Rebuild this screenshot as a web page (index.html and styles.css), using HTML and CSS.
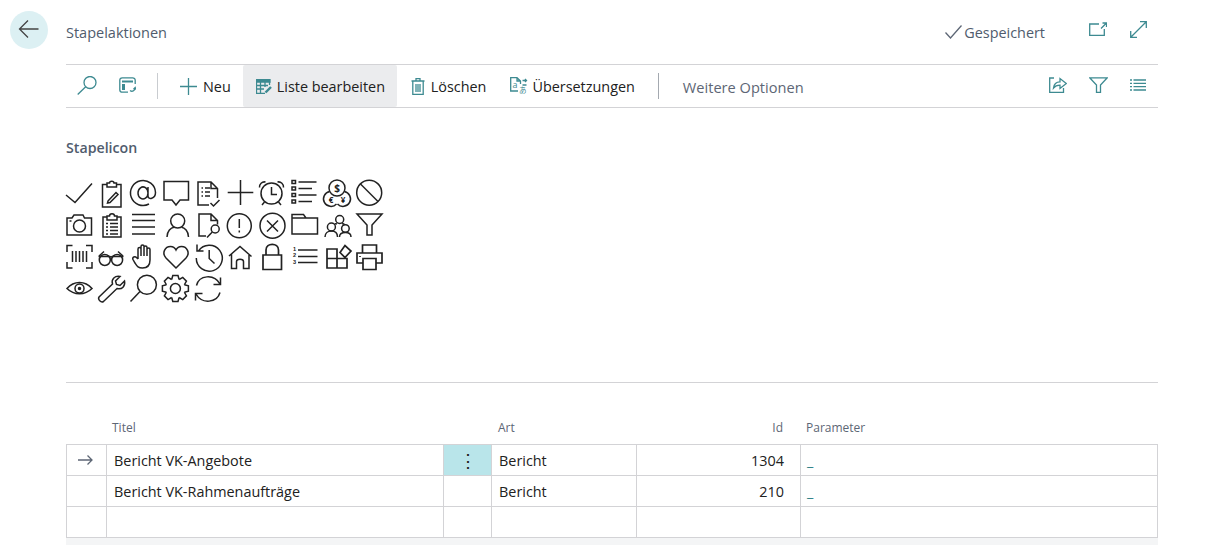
FILE: index.html
```html
<!DOCTYPE html>
<html lang="de">
<head>
<meta charset="utf-8">
<title>Stapelaktionen</title>
<link rel="stylesheet" href="styles.css">
</head>
<body>
<div class="page">
  <header class="head">
    <button class="back" aria-label="Zurück"><svg class="ic-dark" width="22" height="20" viewBox="0 0 22 20"><path d="M20.500 10H1.500M10 1.500L1.500 10L10 18.500"/></svg></button>
    <h1 class="title">Stapelaktionen</h1>
    <div class="saved"><svg class="ic-grey" width="17" height="16" viewBox="0 0 17 16"><path d="M.5 8.500L5.500 14L16.500 1.500"/></svg><span>Gespeichert</span></div>
    <svg class="ic-teal open" width="18" height="14" viewBox="0 0 18 14"><path d="M10 2H.7V13.300H15.300V7M12 6.500L17 1.500M13.500 1H17.500V5"/></svg>
    <svg class="ic-teal expand" width="17" height="17" viewBox="0 0 17 17"><path d="M1 16L16 1M10 .7H16.300V7M.7 10V16.300H7"/></svg>
  </header>

  <nav class="bar">
    <svg class="ic-teal t-search" width="20" height="19" viewBox="0 0 20 19"><circle cx="13" cy="6.500" r="6"/><path d="M8.700 10.800L.7 18.500"/></svg>
    <svg class="ic-teal t-view" width="17" height="16" viewBox="0 0 17 16"><path d="M9 15.200H3.300A2.500 2.500 0 0 1 .8 12.700V3.300A2.500 2.500 0 0 1 3.300 .8H13.700A2.500 2.500 0 0 1 16.200 3.300V7"/><path d="M3 4.500H14" stroke-width="2"/><rect x="3" y="7" width="3" height="6" fill="#3d8a91" stroke="none"/><path d="M11 13.500C13 15 16 14 16.200 11M14.500 12.300L16.200 10.500L16.800 12.500"/></svg>
    <span class="sep first"></span>
    <div class="act neu"><svg class="ic-teal" width="17" height="17" viewBox="0 0 17 17"><path d="M8.500 0V17M0 8.500H17"/></svg><span>Neu</span></div>
    <div class="act hot"><svg class="ic-teal" width="16" height="15" viewBox="0 0 16 15"><path d="M.5 .5H14V3H.5Z" fill="#3d8a91"/><path d="M.5 3V14.500H9M.5 6.500H12M.5 10H8M4.500 3V14.500M9 3V8M13.500 3V6"/><path d="M9.500 13.500L15 8" stroke-width="2.400"/></svg><span>Liste bearbeiten</span></div>
    <div class="act del"><svg class="ic-teal" width="14" height="17" viewBox="0 0 14 17"><path d="M.5 3H13.500M5 3V.7H9V3M1.800 3V16.300H12.200V3M5 6V14M7 6V14M9 6V14"/></svg><span>Löschen</span></div>
    <div class="act tr"><svg class="ic-teal" width="18" height="18" viewBox="0 0 18 18"><path d="M8 14H.7V.7H7L10.500 4V7M7 .7V4H10.500"/><text x="2.500" y="10.500" class="mini">a</text><text x="9" y="15.500" class="mini2">あ</text><path d="M12.500 3.500h4M15 2l1.500 1.500L15 5M12.500 8h4"/></svg><span>Übersetzungen</span></div>
    <span class="sep second"></span>
    <div class="more">Weitere Optionen</div>
    <div class="bar-right">
      <svg class="ic-teal" width="18" height="16" viewBox="0 0 18 16"><path d="M5 1H.7V15.300H14.500V11"/><path d="M4.500 11C5 6.500 8 4.800 11 4.800V1.500L17.300 6.500L11 11.500V8.200C8.500 8.200 6 9 4.500 11Z"/></svg>
      <svg class="ic-teal" width="19" height="16" viewBox="0 0 19 16"><path d="M.7 .8H18.300L11.500 8V15.300H7.500V8Z"/></svg>
      <svg class="ic-teal" width="16" height="12" viewBox="0 0 16 12"><path d="M0 1H2M3.500 1H16M0 4.300H2M3.500 4.300H16M0 7.600H2M3.500 7.600H16M0 11H2M3.500 11H16"/></svg>
    </div>
  </nav>

  <main class="content">
    <h2 class="label">Stapelicon</h2>
    <div class="icons">
      <svg viewBox="0 0 32 32"><path d="M3 18L12 25.500L29 6.500"/></svg>
      <svg viewBox="0 0 32 32"><path d="M12 7.500H7.500V30H26V7.500H21.500M12 10V6H14.500C14.500 3.500 19 3.500 19 6H21.500V10Z"/><path d="M13 24L21 15.500L23 17.500L15 25.500L12.500 26Z"/></svg>
      <svg viewBox="0 0 32 32"><path d="M21 16A5 6 0 1 1 21 15.900M21 10V19C21 23 28.500 22 28.500 15.500A12.500 12.500 0 1 0 22 27"/></svg>
      <svg viewBox="0 0 32 32"><path d="M4 4.500H28.500V23H20L16 28L12 23H4Z"/></svg>
      <svg viewBox="0 0 32 32"><path d="M17 28H6V5H19L25.500 11.500V21M19 5V11.500H25.500M9.500 11H11M13 11H18M9.500 15H11M13 15H18M9.500 19H11M13 19H18"/><path d="M18.500 26L21.500 29L27.500 23"/></svg>
      <svg viewBox="0 0 32 32"><path d="M16.500 3V28M3.700 15.500H29.300"/></svg>
      <svg viewBox="0 0 32 32"><circle cx="15.500" cy="16.500" r="10.500"/><path d="M15.500 10V17.500H21M3.500 10.500A5 5 0 0 1 9.500 5M21.500 5A5 5 0 0 1 27.500 10.500M8.500 25L6 28M22.500 25L25 28"/></svg>
      <svg viewBox="0 0 32 32"><path d="M4 3.500H7.500V6.500H4ZM4 10H7.500V13H4ZM4 16.500H7.500V19.500H4ZM4 23H7.500V26H4ZM10.500 5H28.500M10.500 11.500H24M10.500 18H28.500M10.500 24.500H24"/></svg>
      <svg viewBox="0 0 32 32"><circle cx="16" cy="11" r="8"/><path d="M8.800 14.500A7.500 7.500 0 1 0 15.500 27M23.200 14.500A7.500 7.500 0 1 1 16.500 27"/><text x="16" y="15" class="sym">$</text><text x="10" y="26" class="sym2">€</text><text x="22" y="26" class="sym2">¥</text></svg>
      <svg viewBox="0 0 32 32"><circle cx="16.200" cy="15.700" r="12.500"/><path d="M7.500 7L25 24.500"/></svg>

      <svg viewBox="0 0 32 32"><path d="M4 9H9L11 6H20L21.500 9H28.500V26H4Z"/><circle cx="16.500" cy="17" r="6"/><path d="M6.500 12H8.500"/></svg>
      <svg viewBox="0 0 32 32"><path d="M12 8H8V28H26V8H22M12 11V7H14.500C14.500 4 19.500 4 19.500 7H22V11Z"/><path d="M11 14.500H13M15 14.500H23M11 18H13M15 18H23M11 21.500H13M15 21.500H23M11 25H13M15 25H23"/></svg>
      <svg viewBox="0 0 32 32"><path d="M5 5.500H28M5 11.500H28M5 18H28M5 25H28"/></svg>
      <svg viewBox="0 0 32 32"><circle cx="17.700" cy="12" r="7"/><path d="M7 28C7 22 11 18.500 14 18.200M28.500 28C28.500 22 24.500 18.500 21.500 18.200"/></svg>
      <svg viewBox="0 0 32 32"><path d="M14 27H7V5H19L25.500 11.500V15.500M19 5V11.500H25.500"/><circle cx="23.200" cy="20" r="4"/><path d="M20.300 23L15 28.500"/></svg>
      <svg viewBox="0 0 32 32"><circle cx="15.300" cy="16.700" r="12"/><path d="M15.300 10V19M15.300 21.500V23.500"/></svg>
      <svg viewBox="0 0 32 32"><circle cx="16.500" cy="16.700" r="12.500"/><path d="M11 11.500L22 22.500M22 11.500L11 22.500"/></svg>
      <svg viewBox="0 0 32 32"><path d="M4 5.500H15.500L18 9H29.500V25H4ZM4 9H18"/></svg>
      <svg viewBox="0 0 32 32"><circle cx="18.700" cy="10.500" r="4"/><circle cx="10.400" cy="18" r="4"/><circle cx="24.400" cy="19.500" r="3.800"/><path d="M13.500 15.500C14 14.500 15 14.500 16 15M21 15C22 14.500 23 15 23.500 15.700M4 28C4 24 7 22 10.400 22C14 22 16.500 24 16.500 28M18.500 28C18.500 25 21 23.500 24.400 23.500C27.500 23.500 30 25 30 28"/></svg>
      <svg viewBox="0 0 32 32"><path d="M4 5H29L19 16V26H14V16Z"/></svg>

      <svg viewBox="0 0 32 32"><path d="M9.500 4.500H4V11M23 4.500H29V11M9.500 27H4V21M23 27H29V21M9.500 10V21M13 10V21M16.500 10V21M20 10V21M23.500 10V21"/></svg>
      <svg viewBox="0 0 32 32"><circle cx="9.800" cy="19" r="5.500"/><circle cx="22.100" cy="19" r="5.500"/><path d="M3.500 15.500H15M17 15.500H28.500M15 16.500C15.500 15 16.500 15 17 16.500M4 15L9 10.500M28 15L23 10.500"/></svg>
      <svg viewBox="0 0 32 32"><path d="M11 18V8C11 6 14 6 14 8V5.500C14 3.500 17 3.500 17 5.500V6.500C17 4.500 20 4.500 20 6.500V8.500C20 6.500 23 6.500 23 8.500V19C23 24 21 27 15.500 27C11 27 10 25 8 22L6 18.500C5 16 8 15 9.500 16.500L11 18M14 8V15M17 6.500V15M20 8.500V15"/></svg>
      <svg viewBox="0 0 32 32"><path d="M16 27L6 17C1.500 12 5 5.500 10.500 5.500C13 5.500 15 7 16 9C17 7 19 5.500 21.500 5.500C27 5.500 30.500 12 26 17Z"/></svg>
      <svg viewBox="0 0 32 32"><path d="M6.500 10A13 13 0 1 1 4.300 17M5 3.500V10H11.500M17.200 9V17.500L22.500 22.500"/></svg>
      <svg viewBox="0 0 32 32"><path d="M5 15L16 5.500L27.500 15.500M7.500 13V27.500H12.500V20.500C12.500 17.500 19.500 17.500 19.500 20.500V27.500H25V13"/></svg>
      <svg viewBox="0 0 32 32" class="thick"><path d="M7 14H25.500V28.500H7ZM10 14V9C10 1.500 22.500 1.500 22.500 9V14"/></svg>
      <svg viewBox="0 0 32 32"><path d="M10 9H29.500M10 15.500H29.500M10 21.500H29.500"/><text x="6.500" y="9.500" class="num">1</text><text x="6.500" y="16" class="num">2</text><text x="6.500" y="22.500" class="num">3</text></svg>
      <svg viewBox="0 0 32 32" class="thick"><path d="M6 8H16V27H6ZM6 17.500H26V27H16M19 11.500L24 4.500L30 10L24 16.500Z"/></svg>
      <svg viewBox="0 0 32 32" class="thick"><path d="M9.500 12V4H23.500V12M9.500 22H4V12H29V22H23M10 17.500H23V28.500H10Z"/><path d="M7 15V16"/></svg>

      <svg viewBox="0 0 32 32"><path d="M4 15.500C11 7.500 22 7.500 29 15.500C22 22.500 11 22.500 4 15.500Z"/><circle cx="16.500" cy="15.500" r="4.500"/><circle cx="16.500" cy="15.500" r="1" fill="#222"/></svg>
      <svg viewBox="0 0 32 32"><path d="M4 24L17.500 11C16 6 20 2.500 25 3.500L20.500 8L21.500 11.500L25 12.500L29.500 8C30.500 13 27 17 22 15.500L8.500 28.500C6 30 2.500 26.500 4 24Z"/></svg>
      <svg viewBox="0 0 32 32"><circle cx="19.900" cy="11.700" r="9.500"/><path d="M13 18.500L3.500 28.500"/></svg>
      <svg viewBox="0 0 32 32"><g transform="translate(15.400 15.500)"><circle r="5"/><path d="M-3.700-9L-2.600-13H2.600L3.700-9"/><path transform="rotate(45)" d="M-3.700-9L-2.600-13H2.600L3.700-9"/><path transform="rotate(90)" d="M-3.700-9L-2.600-13H2.600L3.700-9"/><path transform="rotate(135)" d="M-3.700-9L-2.600-13H2.600L3.700-9"/><path transform="rotate(180)" d="M-3.700-9L-2.600-13H2.600L3.700-9"/><path transform="rotate(225)" d="M-3.700-9L-2.600-13H2.600L3.700-9"/><path transform="rotate(270)" d="M-3.700-9L-2.600-13H2.600L3.700-9"/><path transform="rotate(315)" d="M-3.700-9L-2.600-13H2.600L3.700-9"/></g></svg>
      <svg viewBox="0 0 32 32"><path d="M4.500 12.500C7 2 22 .5 28 11M28.500 4.500V11.500H21.500M28 19.500C25 30 10 31.500 4 21M3.500 27.500V20.500H10.500"/></svg>
    </div>

    <div class="rule"></div>

    <table class="grid">
      <colgroup><col class="c0"><col class="c1"><col class="c2"><col class="c3"><col class="c4"><col class="c5"></colgroup>
      <thead>
        <tr><th></th><th class="h-title">Titel</th><th></th><th class="h-art">Art</th><th class="h-id">Id</th><th class="h-par">Parameter</th></tr>
      </thead>
      <tbody>
        <tr>
          <td class="mark"><svg class="ic-grey" width="15" height="10" viewBox="0 0 15 10"><path d="M0 5H14M9.500 .5L14 5L9.500 9.500"/></svg></td>
          <td>Bericht VK-Angebote</td>
          <td class="dots">⋮</td>
          <td>Bericht</td>
          <td class="num-cell">1304</td>
          <td class="link">_</td>
        </tr>
        <tr>
          <td class="mark"></td>
          <td>Bericht VK-Rahmenaufträge</td>
          <td></td>
          <td>Bericht</td>
          <td class="num-cell">210</td>
          <td class="link">_</td>
        </tr>
        <tr><td class="mark"></td><td></td><td></td><td></td><td></td><td></td></tr>
      </tbody>
    </table>
    <div class="strip"></div>
  </main>
</div>
</body>
</html>
```

FILE: styles.css
```css
* { box-sizing: border-box; }
html, body { margin: 0; padding: 0; background: #fff; }
body {
  width: 1210px;
  height: 545px;
  overflow: hidden;
  font-family: "Open Sans", "Noto Sans", sans-serif;
  font-size: 14.4px;
  color: #212121;
}
svg { display: block; flex: none; fill: none; stroke-width: 1.3; }
.ic-dark { stroke: #444; }
.ic-grey { stroke: #5d6675; }
.ic-teal { stroke: #3d8a91; }

.head {
  height: 64px;
  padding: 0 63px 0 10px;
  display: flex;
  align-items: center;
}
.back {
  width: 38px;
  height: 38px;
  margin: -5px 18px 0 0;
  padding: 0;
  border: 0;
  border-radius: 50%;
  background: #dcf0f3;
  display: flex;
  align-items: center;
  justify-content: center;
}
.back svg { margin-top: -2px; }
.title {
  margin: 0;
  font-size: 14.5px;
  font-weight: 400;
  color: #505c6d;
}
.saved {
  margin-left: auto;
  display: flex;
  align-items: center;
  gap: 2px;
  color: #505c6d;
}
.open { margin: -6px 0 0 44px; }
.expand { margin: -6px 0 0 23px; }

.bar {
  height: 44px;
  margin: 0 52px 0 66px;
  border-top: 1px solid #d3d3d6;
  border-bottom: 1px solid #d3d3d6;
  display: flex;
  align-items: center;
}
.t-search { margin: -2px 0 0 11px; }
.t-view { margin: -3px 0 0 22px; }
.sep { width: 1px; height: 26px; background: #c9ccd0; flex: none; }
.sep.first { margin-left: 21px; }
.sep.second { margin-left: 23px; background: #a4a9b0; }
.act { display: flex; align-items: center; height: 100%; white-space: nowrap; }
.act span { padding-top: 1px; }
.neu { margin-left: 22px; gap: 6px; }
.hot {
  margin-left: 12px;
  width: 154px;
  padding-left: 13px;
  gap: 5px;
  background: #ebecee;
  border-radius: 2px;
}
.del { margin-left: 14px; gap: 6px; }
.tr { margin-left: 24px; gap: 4px; }
.more { margin-left: 24px; padding-top: 1px; color: #5d6675; white-space: nowrap; font-size: 14.6px; }
.bar-right {
  margin-left: auto;
  display: flex;
  align-items: center;
  gap: 22px;
  padding-right: 12px;
  margin-top: -3px;
}
.mini { font: 9px "Open Sans", sans-serif; fill: #3d8a91; stroke: none; }
.mini2 { font: 7.5px "Noto Sans CJK JP", sans-serif; fill: #3d8a91; stroke: none; }

.content { padding: 0 52px 0 66px; }
.label {
  margin: 30px 0 19px;
  height: 20px;
  line-height: 20px;
  font-size: 14.2px;
  font-weight: 600;
  color: #505c6d;
}
.icons {
  margin-left: -3px;
  display: grid;
  grid-template-columns: repeat(10, 32.2px);
  grid-auto-rows: 32px;
}
.icons svg { width: 32px; height: 32px; stroke: #222; stroke-width: 1.5; }
.icons svg.thick { stroke-width: 1.7; }
.sym { font: 700 10px "Open Sans", sans-serif; text-anchor: middle; fill: #222; stroke: none; }
.sym2 { font: 700 8px "Open Sans", sans-serif; text-anchor: middle; fill: #222; stroke: none; }
.num { font: 700 5.6px "Liberation Sans", sans-serif; text-anchor: middle; fill: #222; stroke: none; }

.rule { height: 1px; margin-top: 77px; background: #d3d3d6; }

.grid {
  width: 1092px;
  table-layout: fixed;
  border-collapse: separate;
  border-spacing: 0;
}
.c0 { width: 41px; }
.c1 { width: 337px; }
.c2 { width: 48px; }
.c3 { width: 145px; }
.c4 { width: 164px; }
.c5 { width: 357px; }
th {
  height: 62px;
  padding: 0 0 7px;
  vertical-align: bottom;
  font-size: 12px;
  line-height: 18px;
  font-weight: 400;
  text-align: left;
  color: #5d6675;
  border-bottom: 1px solid #d3d3d6;
}
.h-title { padding-left: 5px; }
.h-art { padding-left: 6px; }
.h-id { padding-right: 18px; text-align: right; }
.h-par { padding-left: 5px; }
td {
  height: 31px;
  padding: 0 0 0 7px;
  border-right: 1px solid #d3d3d6;
  border-bottom: 1px solid #d3d3d6;
  white-space: nowrap;
}
td.mark { border-left: 1px solid #d3d3d6; padding: 0 0 0 11px; }
td.dots {
  padding: 0;
  text-align: center;
  background: #b9e5ea;
  font-size: 18px;
  line-height: 20px;
}
td.num-cell { padding: 0 16px 0 0; text-align: right; }
td.link { color: #2f7f86; padding-left: 6px; }
.strip { height: 8px; background: #f4f5f6; }
```
